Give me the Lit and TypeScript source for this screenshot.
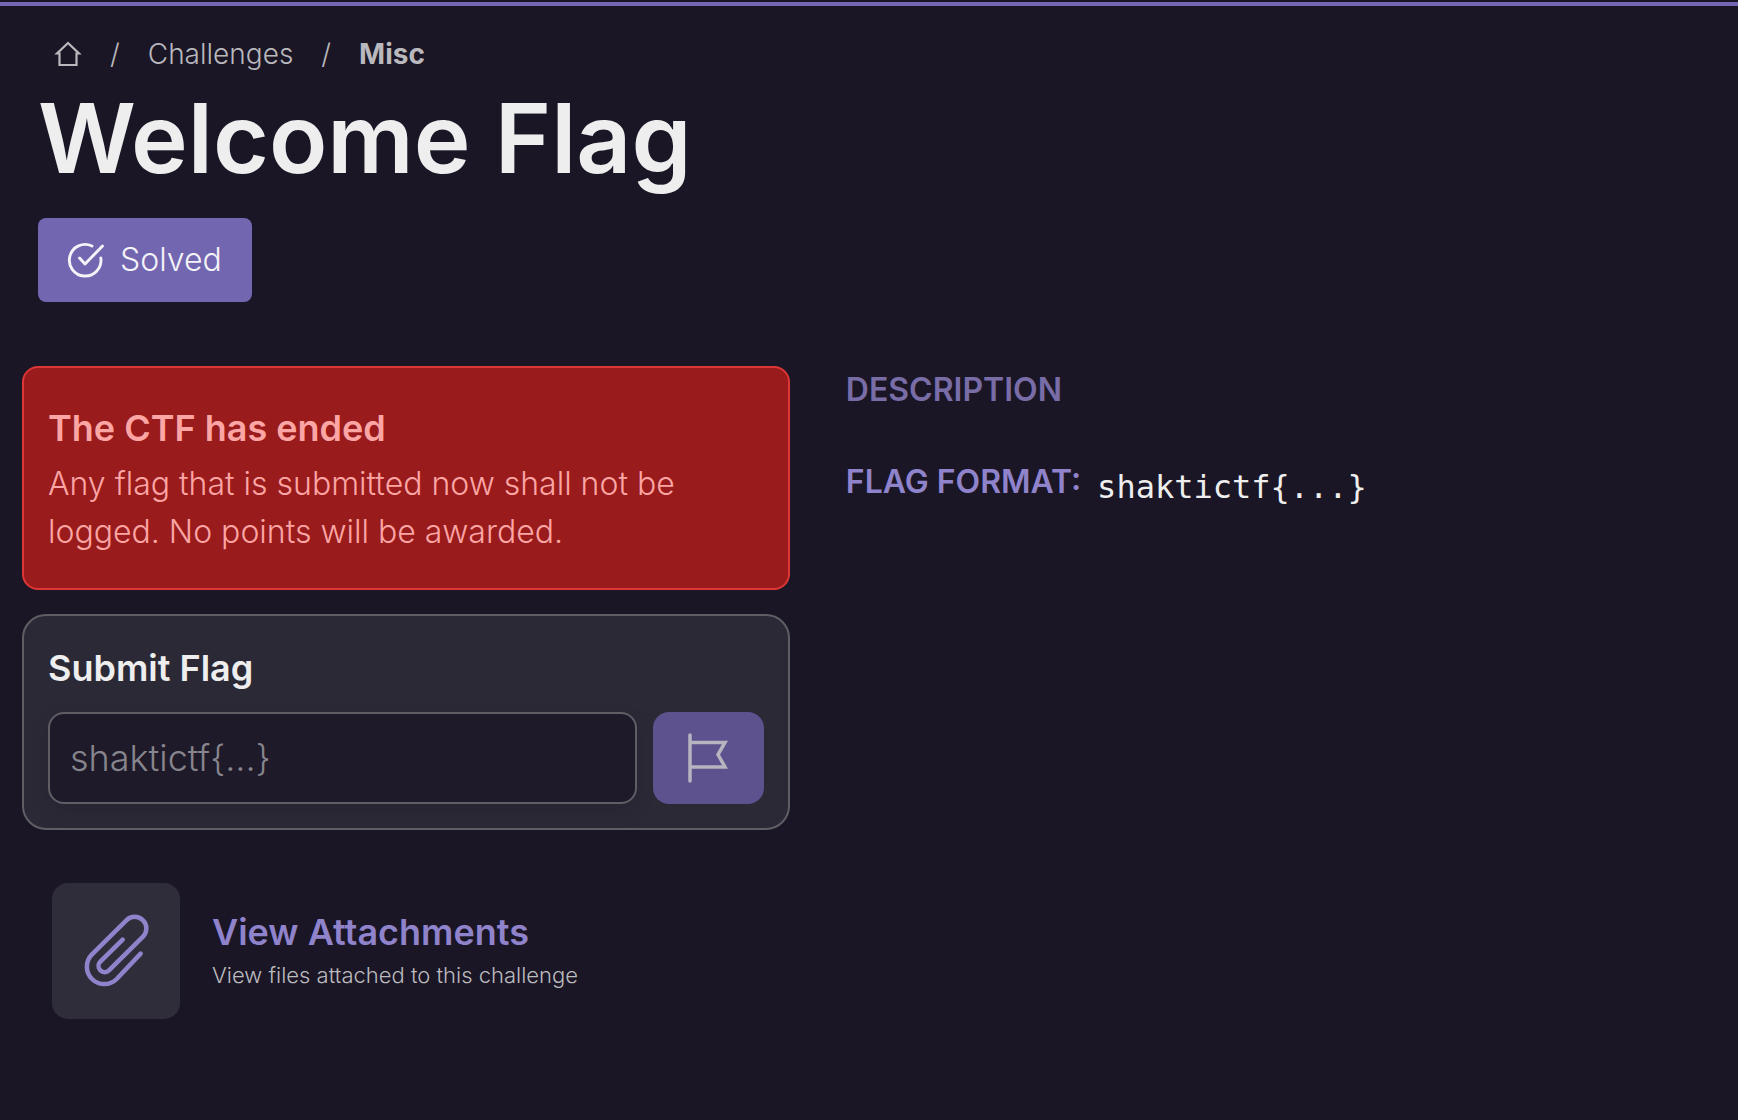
import { LitElement, html, css } from "lit";
import { customElement, state } from "lit/decorators.js";

@customElement("app-root")
export class AppRoot extends LitElement {
  @state() private flag = "";

  static styles = css`
    :host {
      display: block;
      box-sizing: border-box;
      min-height: 100vh;
      padding: 2px 0 48px;
      background: #1a1625;
      color: #eeeeee;
      font-family: Inter, "Liberation Sans", sans-serif;
      font-size: 32px;
      font-weight: 300;
      line-height: 48px;
    }
    *,
    *::before,
    *::after {
      box-sizing: border-box;
    }
    h1,
    h2,
    p,
    ol {
      margin: 0;
      padding: 0;
    }
    a {
      color: inherit;
      text-decoration: none;
    }
    svg {
      display: block;
      flex: none;
      fill: none;
      stroke: currentColor;
    }
    .bar {
      height: 4px;
      background: #7566b1;
    }
    .head {
      padding: 24px 38px 0;
    }
    .crumbs {
      display: flex;
      align-items: center;
      gap: 28px;
      padding-left: 16px;
      list-style: none;
      font-size: 28px;
      line-height: 48px;
      color: #b9b8bd;
    }
    .crumbs li {
      display: flex;
      align-items: center;
      gap: 28px;
    }
    .crumbs li + li::before {
      content: "/";
    }
    .current {
      font-weight: 700;
    }
    .title {
      font-size: 96px;
      line-height: 120px;
      font-weight: 600;
    }
    .solved {
      display: inline-flex;
      align-items: center;
      gap: 16px;
      margin-top: 20px;
      height: 84px;
      padding: 0 30px 0 28px;
      border-radius: 8px;
      background: #7366b1;
      color: #f4f3f8;
    }
    .columns {
      display: grid;
      grid-template-columns: minmax(0, 15fr) minmax(0, 17fr);
      gap: 56px;
      padding: 64px 22px 0;
    }
    .alert {
      padding: 32px 24px;
      border: 2px solid #dc3636;
      border-radius: 16px;
      background: #991b1b;
      color: #fca5a5;
    }
    .heading {
      font-size: 36px;
      line-height: 56px;
      font-weight: 600;
    }
    .alert .heading {
      margin-bottom: 4px;
    }
    .submit {
      display: block;
      margin-top: 24px;
      padding: 24px;
      border: 2px solid #5f5e64;
      border-radius: 24px;
      background: #2b2936;
    }
    .row {
      display: flex;
      gap: 16px;
      margin-top: 16px;
    }
    .field {
      flex: 1;
      min-width: 0;
      height: 92px;
      padding: 0 20px;
      border: 2px solid #5f5e64;
      border-radius: 16px;
      background: #1e1a29;
      box-shadow: 0 8px 20px rgba(0, 0, 0, 0.1);
      color: #eeeeee;
      font: inherit;
      font-size: 36px;
    }
    .field::placeholder {
      color: #87858d;
      opacity: 1;
    }
    .send {
      display: flex;
      align-items: center;
      justify-content: center;
      width: 111px;
      height: 92px;
      padding: 0;
      border: 0;
      border-radius: 16px;
      background: #5d528d;
      color: #b6b4bf;
    }
    .attach {
      display: flex;
      align-items: center;
      gap: 32px;
      margin: 53px 30px 0;
    }
    .tile {
      display: flex;
      align-items: center;
      justify-content: center;
      width: 128px;
      height: 136px;
      border-radius: 16px;
      background: #302d3a;
      color: #8f83cb;
    }
    .attach-text {
      padding-bottom: 8px;
    }
    .attach-title {
      display: block;
      font-size: 36px;
      line-height: 56px;
      font-weight: 600;
      color: #8f83cb;
    }
    .attach-note {
      display: block;
      font-size: 22px;
      line-height: 30px;
      color: #bcbbbf;
    }
    .label {
      font-size: 32px;
      line-height: 48px;
      font-weight: 600;
      color: #8f83cb;
    }
    .dim {
      color: #796da8;
    }
    .format {
      display: flex;
      align-items: center;
      gap: 16px;
      margin-top: 39px;
    }
    .format code {
      padding-top: 10px;
      font-family: "DejaVu Sans Mono", monospace;
      font-size: 32px;
      font-weight: 400;
      line-height: 48px;
    }
  `;

  render() {
    return html`
      <div class="bar"></div>
      <header class="head">
        <nav aria-label="Breadcrumb">
          <ol class="crumbs">
            <li>
              <a href="#" aria-label="Home">
                <svg width="28" height="28" viewBox="1 1 28 28" stroke-width="2.2">
                  <path d="M6.500 14.500H4L15 4l11 10.500h-2.500V26h-17z" />
                </svg>
              </a>
            </li>
            <li><a href="#challenges">Challenges</a></li>
            <li><a class="current" href="#misc" aria-current="page">Misc</a></li>
          </ol>
        </nav>
        <h1 class="title">Welcome Flag</h1>
        <div class="solved">
          <svg width="38" height="38" viewBox="0 0 38 38" stroke-width="2.9" stroke-linecap="round" stroke-linejoin="round">
            <path d="M26 5A15.8 15.8 0 1 0 34.8 17" />
            <path d="M13.500 17l5.500 6L36.500 5" />
          </svg>
          <span>Solved</span>
        </div>
      </header>
      <main class="columns">
        <section>
          <div class="alert" role="alert">
            <h2 class="heading">The CTF has ended</h2>
            <p>Any flag that is submitted now shall not be logged. No points will be awarded.</p>
          </div>
          <form class="submit" @submit=${(e: Event) => e.preventDefault()}>
            <label class="heading" for="flag">Submit Flag</label>
            <div class="row">
              <input
                class="field"
                id="flag"
                type="text"
                placeholder="shaktictf{...}"
                .value=${this.flag}
                @input=${(e: Event) => (this.flag = (e.target as HTMLInputElement).value)}
              />
              <button class="send" type="submit" aria-label="Submit flag">
                <svg width="42" height="50" viewBox="0 0 42 50" stroke-width="3.500" stroke-linecap="round" stroke-linejoin="miter">
                  <path d="M3 2v46M3 9.500h35l-7 12 7 12.500H3" />
                </svg>
              </button>
            </div>
          </form>
          <a class="attach" href="#attachments">
            <span class="tile">
              <svg width="75" height="90" viewBox="-4 3 225 270" stroke-width="13.500" stroke-linecap="round">
                <path d="M181 146L109 222A52 52 0 0 1 35 148L138 46A35 35 0 0 1 188 95L86 196A18 18 0 0 1 60 170L127 104" />
              </svg>
            </span>
            <span class="attach-text">
              <span class="attach-title">View Attachments</span>
              <span class="attach-note">View files attached to this challenge</span>
            </span>
          </a>
        </section>
        <section>
          <h2 class="label dim">DESCRIPTION</h2>
          <div class="format">
            <h2 class="label">FLAG FORMAT:</h2>
            <code>shaktictf{...}</code>
          </div>
        </section>
      </main>
    `;
  }
}
